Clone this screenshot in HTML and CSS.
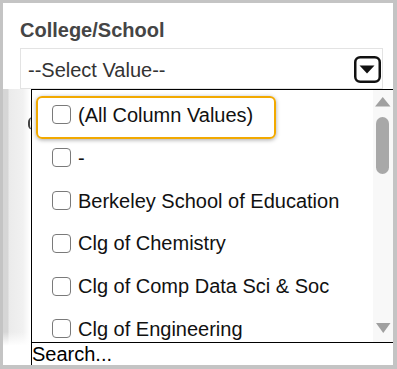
FILE: index.html
```html
<!DOCTYPE html>
<html>
  <head>
    <title>College/School filter</title>
    <link rel="stylesheet" href="styles.css">
  </head>
  <body>
    <div class="frame">
      <div class="field">
        <div class="field-label">College/School</div>
        <div class="select-box">
          <span class="select-value">--Select Value--</span>
          <svg class="select-toggle" width="27" height="27" viewBox="0 0 27 27">
            <rect x="1.25" y="1.25" width="24.5" height="24.5" rx="5" fill="#fff" stroke="#111" stroke-width="2.5"/>
            <polygon points="5.5,9.5 20.5,9.5 13,17.5" fill="#111"/>
          </svg>
        </div>
      </div>

      <div class="backdrop">
        <span class="hidden-mark"></span>
      </div>

      <div class="dropdown">
        <div class="options">
          <div class="option-list">
            <div class="option focused"><span class="check"></span>(All Column Values)</div>
            <div class="option"><span class="check"></span>-</div>
            <div class="option"><span class="check"></span>Berkeley School of Education</div>
            <div class="option"><span class="check"></span>Clg of Chemistry</div>
            <div class="option"><span class="check"></span>Clg of Comp Data Sci &amp; Soc</div>
            <div class="option"><span class="check"></span>Clg of Engineering</div>
          </div>
          <div class="scrollbar">
            <svg width="20" height="252" viewBox="0 0 20 252">
              <polygon points="2,16.5 17.5,16.5 9.75,7" fill="#a0a0a0"/>
              <rect x="3" y="27" width="13" height="57" rx="6.5" fill="#a8a8a8"/>
              <polygon points="3,233 17.5,233 10.25,243" fill="#a0a0a0"/>
            </svg>
          </div>
        </div>
        <div class="search">Search...</div>
      </div>
    </div>
  </body>
</html>
```

FILE: styles.css
```css
body {
  margin: 0;
  font-family: "Liberation Sans", Arial, sans-serif;
}

.frame {
  position: relative;
  box-sizing: border-box;
  width: 397px;
  height: 369px;
  display: flex;
  flex-direction: column;
  border: 3px solid #c4c4c4;
  border-right-width: 4px;
  border-bottom-width: 4px;
  background: #fff;
  overflow: hidden;
}

.field {
  padding: 15px 10px 0 17px;
}

.field-label {
  font-size: 20px;
  line-height: 24px;
  font-weight: bold;
  color: #454545;
}

.select-box {
  box-sizing: border-box;
  height: 41px;
  margin-top: 6px;
  padding: 2px 1px 0 7px;
  display: flex;
  align-items: center;
  justify-content: space-between;
  border: 1px solid #e3e3e3;
}

.select-value {
  font-size: 20px;
  line-height: 24px;
  color: #333;
}

.select-toggle {
  display: block;
}

.backdrop {
  flex: 1;
  padding: 28px 0 0 25px;
  background:
    linear-gradient(to bottom, rgba(255, 255, 255, 0) 0, rgba(255, 255, 255, 0) 88%, #fff 93%),
    linear-gradient(to right, #d6d6d6 0, #d6d6d6 5px, #ebebeb 6px, #f1f1f1 20px, #fff 27px);
}

/* left edge of a label that sits under the open dropdown */
.hidden-mark {
  display: block;
  width: 6px;
  height: 13px;
  box-sizing: border-box;
  border-left: 2px solid #444;
  border-radius: 5px 0 0 5px;
}

.dropdown {
  position: absolute;
  left: 28px;
  top: 86px;
  right: 0;
  bottom: 0;
  display: flex;
  flex-direction: column;
  border-left: 1px solid #000;
  border-top: 1px solid #000;
  background: #fff;
}

.options {
  height: 252px;
  display: flex;
}

.option-list {
  flex: 1;
  padding-top: 3.6px;
  overflow: hidden;
}

.option {
  position: relative;
  height: 42.8px;
  padding-left: 20px;
  display: flex;
  align-items: center;
  font-size: 20px;
  line-height: 24px;
  color: #111;
  white-space: nowrap;
}

.check {
  box-sizing: border-box;
  width: 19px;
  height: 19px;
  margin-right: 7px;
  border: 1.5px solid #7a7a7a;
  border-radius: 4px;
  background: #fff;
}

.focused::after {
  content: "";
  position: absolute;
  left: 4px;
  top: 2.4px;
  width: 240px;
  height: 43px;
  box-sizing: border-box;
  border: 2px solid #f2a900;
  border-radius: 6px;
  box-shadow: 0 1px 4px rgba(0, 0, 0, 0.35);
}

.scrollbar {
  width: 20px;
  background: #f8f8f8;
}

.scrollbar svg {
  display: block;
}

.search {
  height: 22px;
  border-top: 1px solid #000;
  font-size: 20px;
  line-height: 22px;
  color: #000;
}
```
